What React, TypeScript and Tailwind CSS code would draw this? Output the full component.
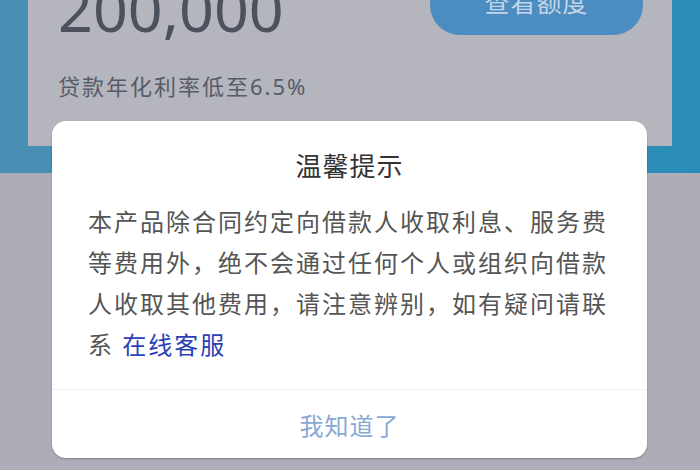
export default function App() {
  return (
    <div
      className="relative w-[700px] h-[470px] overflow-hidden bg-[#adadb8]"
      style={{ fontFamily: '"Noto Sans", "Noto Sans CJK SC", sans-serif' }}
    >
      {/* dimmed page behind the dialog */}
      <div className="h-[173px] bg-gradient-to-r from-[#4a8fb5] to-[#2a8db8]">
        <div className="mx-[28px] h-[146px] bg-[#b5b5be] flex justify-between">
          <div className="pl-[30px]">
            <div className="text-[61px] leading-none text-[#4b525e] -mt-[22px]">200,000</div>
            <div className="mt-[31px] text-[22px] tracking-[2px] text-[#555b67]">贷款年化利率低至6.5%</div>
          </div>
          <div className="mr-[29px] -mt-[25px] w-[213px] h-[60px] rounded-full bg-[#4b8dc0] flex items-center justify-center">
            <span className="text-[25px] tracking-[1px] text-[#c5d5e6] mt-[-4px]">查看额度</span>
          </div>
        </div>
      </div>

      {/* modal */}
      <div className="absolute left-[52px] top-[121px] w-[595px] h-[337px] rounded-[14px] bg-white shadow-[0_1px_2px_rgba(0,0,0,0.25)] flex flex-col">
        <div className="px-[36px] pt-[27px] pb-[24px]">
          <div className="text-center text-[26px] leading-[36px] tracking-[1px] text-[#333]">温馨提示</div>
          <p className="mt-[17px] text-[24px] leading-[41px] tracking-[2px] text-[#555]">
            本产品除合同约定向借款人收取利息、服务费等费用外，绝不会通过任何个人或组织向借款人收取其他费用，请注意辨别，如有疑问请联系 <span className="text-[#2a3fb8]">在线客服</span>
          </p>
        </div>
        <div className="border-t border-[#efefef] flex-1 flex items-center justify-center">
          <span className="text-[24px] tracking-[1px] text-[#8aa8d4] mt-[4px]">我知道了</span>
        </div>
      </div>
    </div>
  );
}
